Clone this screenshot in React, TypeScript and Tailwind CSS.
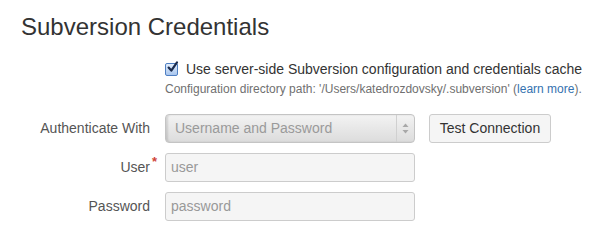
import React from 'react';

function Checkbox() {
  return (
    <span className="inline-flex h-[13px] w-[13px] shrink-0 items-center justify-center rounded-[2px] border border-[#4f7fc2] bg-gradient-to-b from-[#e3eefc] to-[#a9c6ee]">
      <svg width="11" height="11" viewBox="0 0 11 11" className="-mt-[3px] ml-[1px] overflow-visible">
        <path d="M1.6 5.6 L4.3 8.6 L10 0.4" fill="none" stroke="#1b2b4d" strokeWidth="2.2" strokeLinecap="round" strokeLinejoin="round" />
      </svg>
    </span>
  );
}

function Label({ children, required }: { children: React.ReactNode; required?: boolean }) {
  return (
    <div className="flex h-[29px] w-[150px] shrink-0 items-center justify-end text-[14px] text-[#555]">
      <span className="relative">
        {children}
        {required && <span className="absolute -right-[7px] -top-[5px] text-[13px] font-bold text-[#d04437]">*</span>}
      </span>
    </div>
  );
}

function TextField({ placeholder }: { placeholder: string }) {
  return (
    <div className="flex h-[29px] w-[250px] items-center rounded-[3px] border border-[#cccccc] bg-[#f5f5f5] px-[5px] text-[14px] text-[#999]">
      {placeholder}
    </div>
  );
}

export default function App() {
  return (
    <div className="h-[237px] w-[616px] bg-white pt-[12px] font-['Liberation_Sans',Arial,sans-serif] text-[#333]">
      <h1 className="px-[21px] text-[24px] leading-[30px]">Subversion Credentials</h1>

      <div className="mt-[17px] pl-[165px]">
        <div className="flex h-[20px] items-center gap-[8px] text-[14px] text-[#333]">
          <Checkbox />
          <span>Use server-side Subversion configuration and credentials cache</span>
        </div>
        <p className="mt-[2px] text-[12px] leading-[16px] text-[#707070]">
          Configuration directory path: '/Users/katedrozdovsky/.subversion' (<span className="text-[#3572b0]">learn more</span>).
        </p>
      </div>

      <div className="mt-[17px] flex flex-col gap-[10px]">
        <div className="flex items-center gap-[15px]">
          <Label>Authenticate With</Label>
          <div className="relative flex h-[29px] w-[250px] items-center rounded-[4px] border border-[#c4c4c4] bg-gradient-to-b from-[#f3f3f3] to-[#dcdcdc] pl-[9px] text-[14px] text-[#9a9a9a] shadow-[inset_2px_0_2px_rgba(0,0,0,0.12)]">
            Username and Password
            <div className="absolute right-0 top-0 flex h-full w-[18px] items-center justify-center border-l border-[#d0d0d0]">
              <svg width="7" height="11" viewBox="0 0 7 11">
                <path d="M3.5 0.5 L6.5 4 L0.5 4 Z" fill="#a8a8a8" />
                <path d="M3.5 10.5 L6.5 7 L0.5 7 Z" fill="#a8a8a8" />
              </svg>
            </div>
          </div>
          <button className="ml-[-1px] h-[29px] w-[122px] rounded-[3px] border border-[#cccccc] bg-[#f5f5f5] text-[14px] text-[#333]">
            Test Connection
          </button>
        </div>
        <div className="flex items-center gap-[15px]">
          <Label required>User</Label>
          <TextField placeholder="user" />
        </div>
        <div className="flex items-center gap-[15px]">
          <Label>Password</Label>
          <TextField placeholder="password" />
        </div>
      </div>
    </div>
  );
}
